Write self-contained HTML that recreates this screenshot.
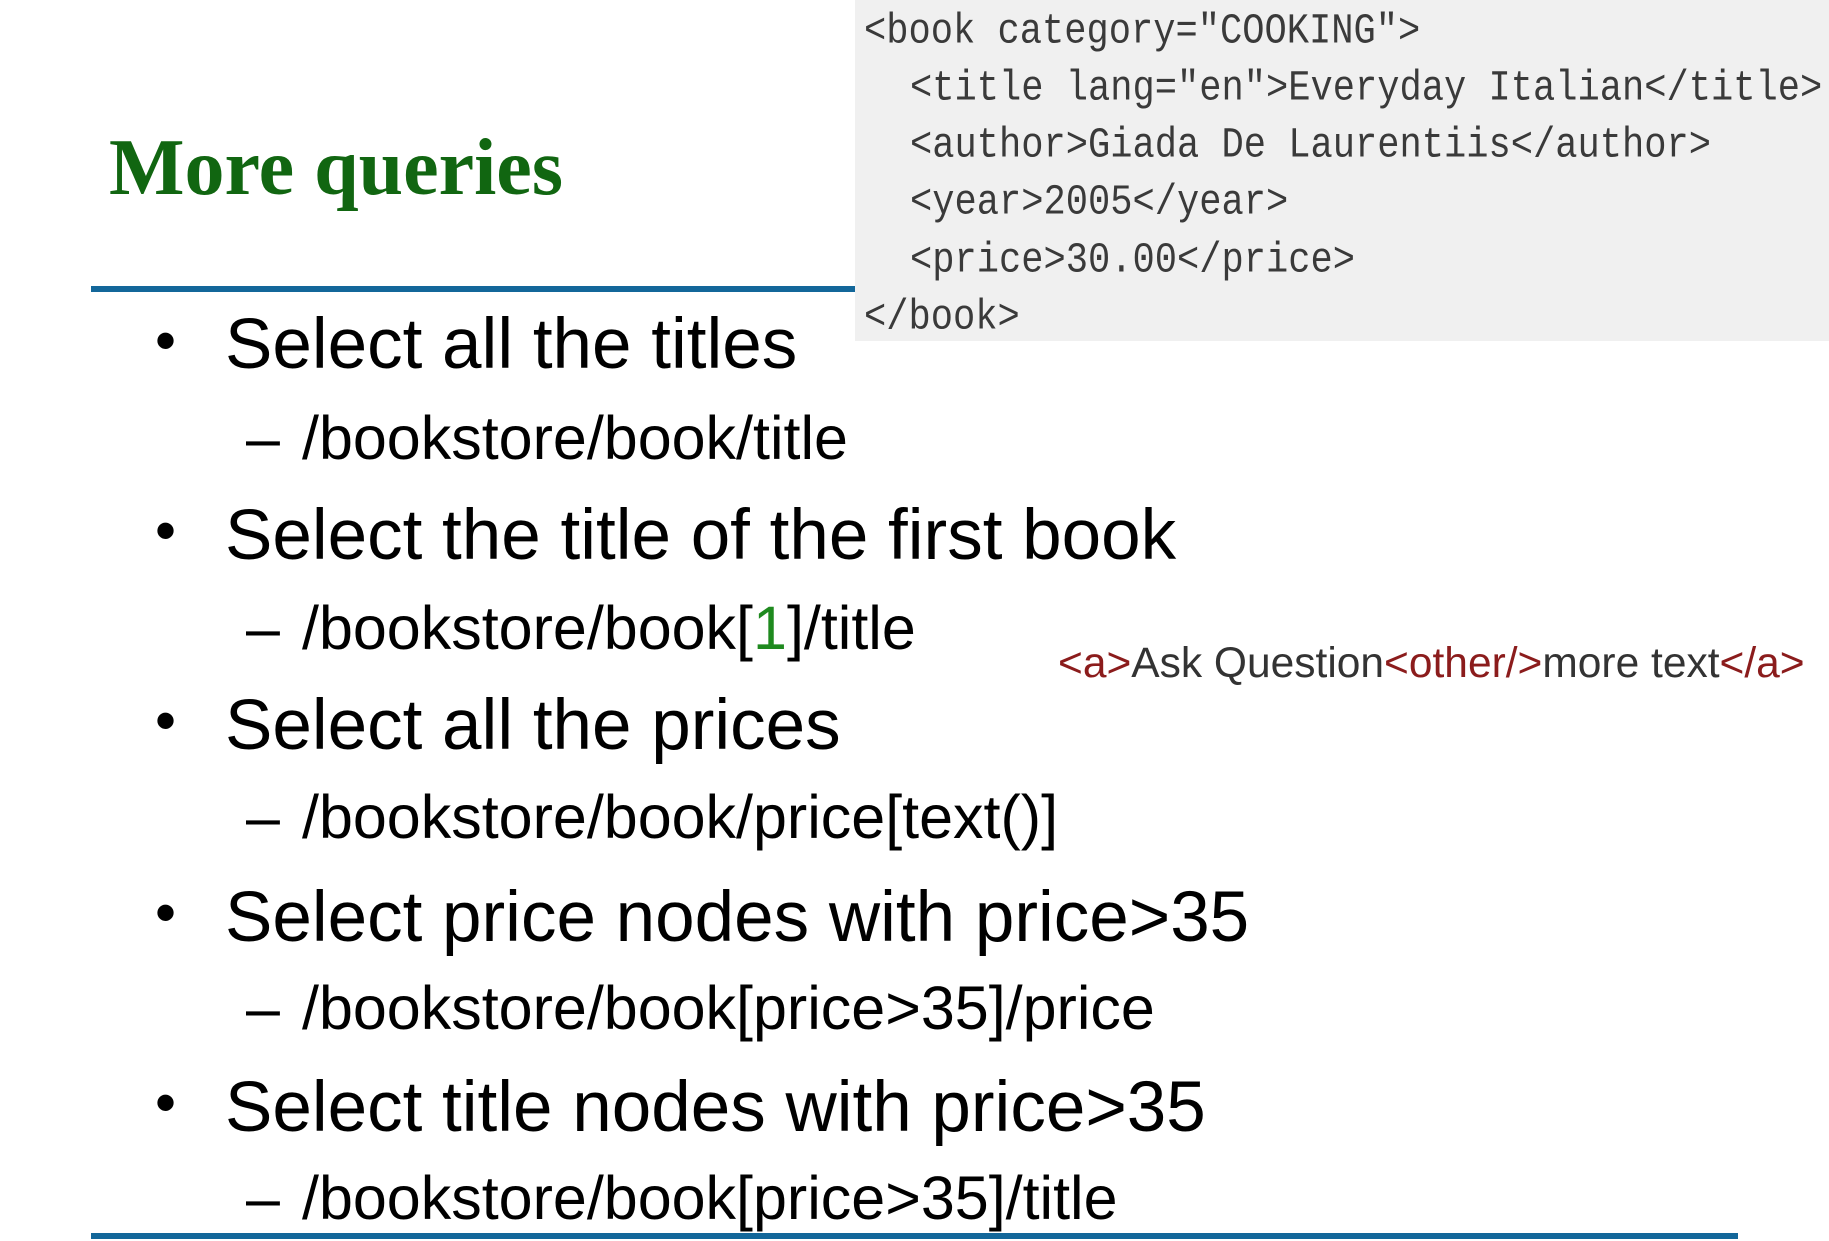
<!DOCTYPE html>
<html><head><meta charset="utf-8"><style>
html,body{margin:0;padding:0;background:#fff;}
body{width:1829px;height:1241px;position:relative;overflow:hidden;}
.abs{position:absolute;white-space:nowrap;}
.title{font-family:"Liberation Serif",serif;font-weight:bold;color:#116611;font-size:80px;left:109px;top:128px;line-height:1;}
.code{left:855px;top:0;width:974px;height:341px;background:#f0f0f0;}
.cl{font-family:"Liberation Mono",monospace;font-size:37.1px;color:#3a3a3a;transform:scaleY(1.15);transform-origin:left bottom;line-height:1;}
.b{font-family:"Liberation Sans",sans-serif;font-size:71px;color:#000;line-height:1;}
.s{font-family:"Liberation Sans",sans-serif;font-size:61px;color:#000;line-height:1;}
.dot{font-family:"Liberation Sans",sans-serif;font-size:60px;}
.q{font-family:"Liberation Sans",sans-serif;font-size:42.5px;color:#333;line-height:1;}
.q i{font-style:normal;color:#8b1c1c;}
</style></head><body>
<div class="abs title">More queries</div>
<div class="abs" style="left:91px;top:286px;width:764px;height:6px;background:#13679a;"></div>
<div class="abs" style="left:91px;top:1233px;width:1647px;height:6px;background:#13679a;"></div>
<div class="abs code"></div>
<div class="abs cl" style="left:864px;top:17px;">&lt;book category="COOKING"&gt;</div>
<div class="abs cl" style="left:910px;top:74px;">&lt;title lang="en"&gt;Everyday Italian&lt;/title&gt;</div>
<div class="abs cl" style="left:910px;top:131px;">&lt;author&gt;Giada De Laurentiis&lt;/author&gt;</div>
<div class="abs cl" style="left:910px;top:188px;">&lt;year&gt;2005&lt;/year&gt;</div>
<div class="abs cl" style="left:910px;top:246px;">&lt;price&gt;30.00&lt;/price&gt;</div>
<div class="abs cl" style="left:864px;top:303px;">&lt;/book&gt;</div>

<div class="abs dot" style="left:155px;top:306px;">•</div>
<div class="abs b" style="left:225px;top:309px;">Select all the titles</div>
<div class="abs s" style="left:246px;top:408px;">–</div><div class="abs s" style="left:302px;top:408px;">/bookstore/book/title</div>
<div class="abs dot" style="left:155px;top:496px;">•</div>
<div class="abs b" style="left:225px;top:500px;">Select the title of the first book</div>
<div class="abs s" style="left:246px;top:598px;">–</div><div class="abs s" style="left:302px;top:598px;">/bookstore/book[<span style="color:#1f8a1f">1</span>]/title</div>
<div class="abs dot" style="left:155px;top:686px;">•</div>
<div class="abs b" style="left:225px;top:690px;">Select all the prices</div>
<div class="abs s" style="left:246px;top:787px;">–</div><div class="abs s" style="left:302px;top:787px;">/bookstore/book/price[text()]</div>
<div class="abs dot" style="left:155px;top:878px;">•</div>
<div class="abs b" style="left:225px;top:882px;">Select price nodes with price&gt;35</div>
<div class="abs s" style="left:246px;top:978px;">–</div><div class="abs s" style="left:302px;top:978px;">/bookstore/book[price&gt;35]/price</div>
<div class="abs dot" style="left:155px;top:1068px;">•</div>
<div class="abs b" style="left:225px;top:1072px;">Select title nodes with price&gt;35</div>
<div class="abs s" style="left:246px;top:1168px;">–</div><div class="abs s" style="left:302px;top:1168px;">/bookstore/book[price&gt;35]/title</div>

<div class="abs q" style="left:1058px;top:643px;"><i>&lt;a&gt;</i>Ask Question<i>&lt;other/&gt;</i>more text<i>&lt;/a&gt;</i></div>
</body></html>
